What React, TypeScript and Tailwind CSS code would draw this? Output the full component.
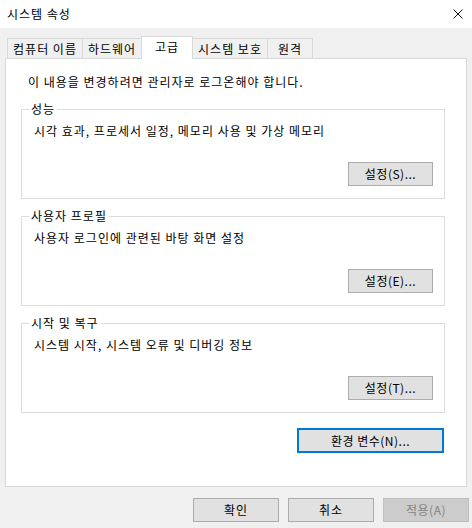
const font = { fontFamily: '"Noto Sans CJK KR", "Noto Sans", sans-serif' };

const Tab = ({ label, w, active }: { label: string; w: string; active?: boolean }) =>
  active ? (
    <div
      className={`${w} -ml-px h-[23px] -mb-px relative z-10 flex items-center justify-center bg-white border border-b-0 border-[#d9d9d9] pb-[3px]`}
    >
      {label}
    </div>
  ) : (
    <div
      className={`${w} -ml-px first:ml-0 h-[20px] flex items-center justify-center bg-[#f0f0f0] border border-b-0 border-[#d9d9d9]`}
    >
      {label}
    </div>
  );

const Group = ({ title, text, btn }: { title: string; text: string; btn: string }) => (
  <div className="relative w-[424px] h-[90px] border border-[#dcdcdc] flex flex-col">
    <span className="absolute -top-[9px] left-[7px] bg-white px-[2px] leading-[16px]">{title}</span>
    <div className="pl-[12px] pt-[13px] leading-[16px]">{text}</div>
    <div className="mt-auto mb-[12px] mr-[11px] flex justify-end">
      <button className="w-[85px] h-[24px] bg-[#e1e1e1] border border-[#adadad] leading-[16px] tracking-[0.5px]">
        {btn}
      </button>
    </div>
  </div>
);

export default function App() {
  return (
    <div
      className="w-[472px] h-[528px] bg-[#f0f0f0] text-[12px] tracking-[1px] text-black flex flex-col"
      style={font}
    >
      <div className="h-[28px] bg-white flex items-center justify-between pl-[7px] pr-[9px]">
        <span className="leading-[16px]">시스템 속성</span>
        <svg width="10" height="10" viewBox="0 0 10 10" className="text-[#111]">
          <path d="M0.5 0.5L9.5 9.5M9.5 0.5L0.5 9.5" stroke="currentColor" strokeWidth="1" />
        </svg>
      </div>

      <div className="h-[30px] pl-[7px] flex items-end">
        <Tab label="컴퓨터 이름" w="w-[76px]" />
        <Tab label="하드웨어" w="w-[60px]" />
        <Tab label="고급" w="w-[52px]" active />
        <Tab label="시스템 보호" w="w-[76px]" />
        <Tab label="원격" w="w-[46px]" />
      </div>

      <div className="ml-[5px] w-[462px] h-[429px] border border-[#d9d9d9] bg-white pt-[15px] px-[15px] flex flex-col">
        <div className="pl-[7px] leading-[16px]">이 내용을 변경하려면 관리자로 로그온해야 합니다.</div>
        <div className="mt-[19px] flex flex-col gap-[17px]">
          <Group title="성능" text="시각 효과, 프로세서 일정, 메모리 사용 및 가상 메모리" btn="설정(S)..." />
          <Group title="사용자 프로필" text="사용자 로그인에 관련된 바탕 화면 설정" btn="설정(E)..." />
          <Group title="시작 및 복구" text="시스템 시작, 시스템 오류 및 디버깅 정보" btn="설정(T)..." />
        </div>
        <div className="mt-[15px] w-[424px] flex justify-end">
          <button className="mr-px w-[147px] h-[25px] bg-[#e1e1e1] border-2 border-[#0078d7] leading-[16px] tracking-[0.5px]">
            환경 변수(N)...
          </button>
        </div>
      </div>

      <div className="mt-[11px] pl-[193px] flex gap-[9px]">
        <button className="w-[86px] h-[24px] bg-[#e1e1e1] border border-[#adadad] leading-[16px]">확인</button>
        <button className="w-[86px] h-[24px] bg-[#e1e1e1] border border-[#adadad] leading-[16px]">취소</button>
        <button className="w-[86px] h-[24px] bg-[#cccccc] border border-[#bfbfbf] text-[#838383] leading-[16px] tracking-[0.5px]">
          적용(A)
        </button>
      </div>
    </div>
  );
}
